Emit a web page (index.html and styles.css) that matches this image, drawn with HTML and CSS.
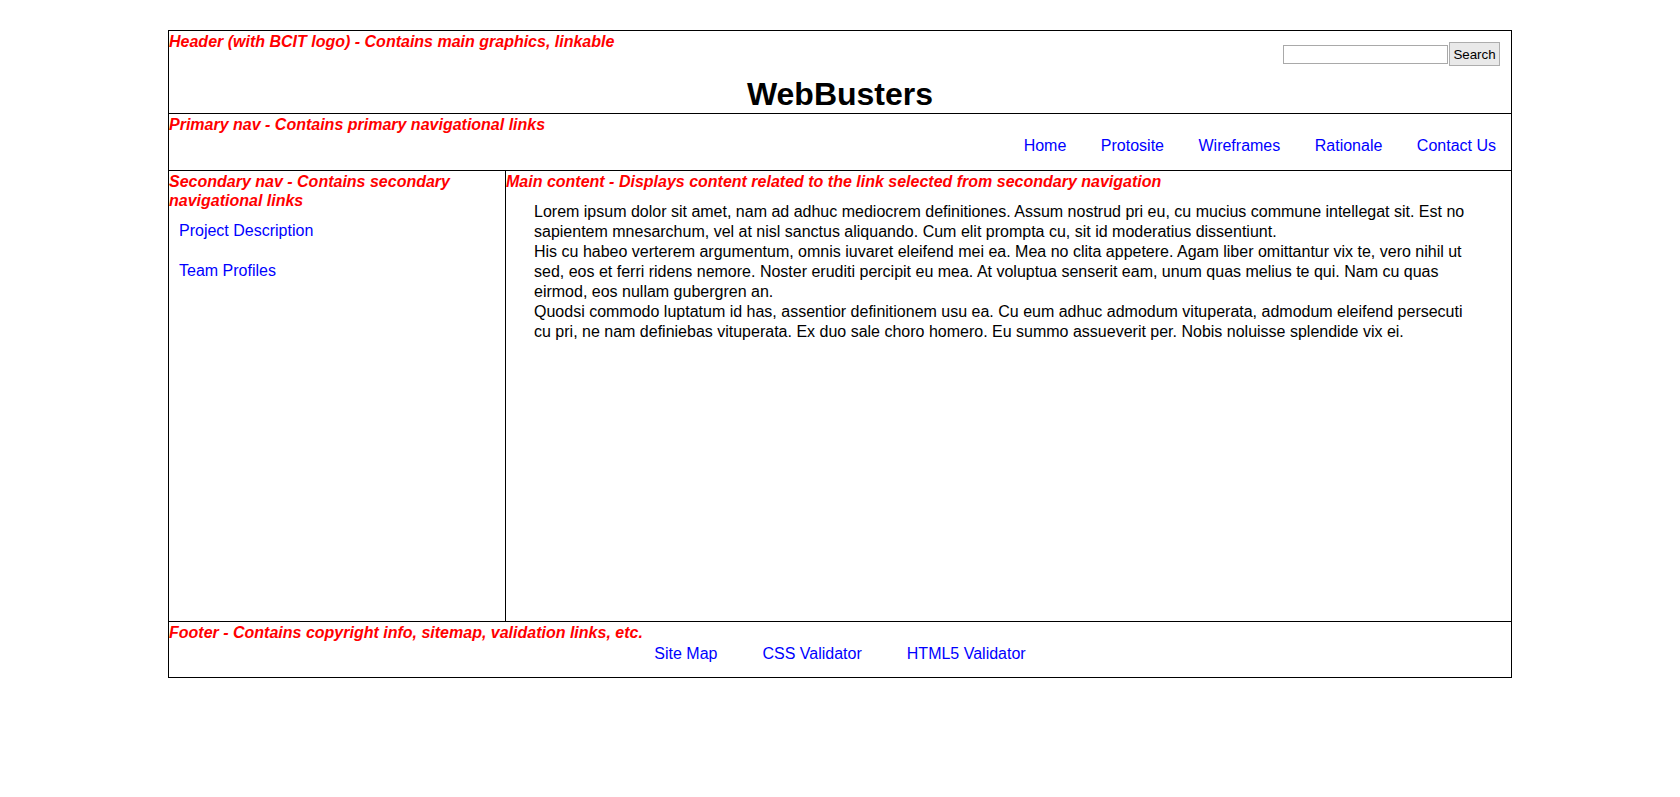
FILE: index.html
```html
<!DOCTYPE html>
<html lang="en">
<head>
<meta charset="utf-8">
<title>WebBusters</title>
<link rel="stylesheet" href="styles.css">
</head>
<body>
<div class="page">
  <header class="site-header">
    <div class="header-row">
      <p class="label">Header (with BCIT logo) - Contains main graphics, linkable</p>
      <form class="search" action="#">
        <input class="search-input" type="text" aria-label="Search">
        <button class="search-btn" type="button">Search</button>
      </form>
    </div>
    <h1 class="site-title">WebBusters</h1>
  </header>
  <nav class="primary-nav">
    <p class="label">Primary nav - Contains primary navigational links</p>
    <ul class="primary-links">
      <li><a href="#">Home</a></li>
      <li><a href="#">Protosite</a></li>
      <li><a href="#">Wireframes</a></li>
      <li><a href="#">Rationale</a></li>
      <li><a href="#">Contact Us</a></li>
    </ul>
  </nav>
  <div class="middle">
    <aside class="secondary-nav">
      <p class="label">Secondary nav - Contains secondary navigational links</p>
      <ul class="secondary-links">
        <li><a href="#">Project Description</a></li>
        <li><a href="#">Team Profiles</a></li>
      </ul>
    </aside>
    <main class="main-content">
      <p class="label">Main content - Displays content related to the link selected from secondary navigation</p>
      <p class="body-text">Lorem ipsum dolor sit amet, nam ad adhuc mediocrem definitiones. Assum nostrud pri eu, cu mucius commune intellegat sit. Est no sapientem mnesarchum, vel at nisl sanctus aliquando. Cum elit prompta cu, sit id moderatius dissentiunt.<br>His cu habeo verterem argumentum, omnis iuvaret eleifend mei ea. Mea no clita appetere. Agam liber omittantur vix te, vero nihil ut sed, eos et ferri ridens nemore. Noster eruditi percipit eu mea. At voluptua senserit eam, unum quas melius te qui. Nam cu quas eirmod, eos nullam gubergren an.<br>Quodsi commodo luptatum id has, assentior definitionem usu ea. Cu eum adhuc admodum vituperata, admodum eleifend persecuti cu pri, ne nam definiebas vituperata. Ex duo sale choro homero. Eu summo assueverit per. Nobis noluisse splendide vix ei.</p>
    </main>
  </div>
  <footer class="site-footer">
    <p class="label">Footer - Contains copyright info, sitemap, validation links, etc.</p>
    <ul class="footer-links">
      <li><a href="#">Site Map</a></li>
      <li><a href="#">CSS Validator</a></li>
      <li><a href="#">HTML5 Validator</a></li>
    </ul>
  </footer>
</div>
</body>
</html>
```

FILE: styles.css
```css
html, body {
  margin: 0;
  padding: 0;
  background: #fff;
}

body {
  font-family: "Liberation Sans", Arial, sans-serif;
  font-size: 16px;
  color: #000;
}

a {
  color: #0000ff;
  text-decoration: none;
}

ul {
  list-style: none;
  margin: 0;
  padding: 0;
}

.page {
  box-sizing: border-box;
  width: 1344px;
  margin: 30px auto 0;
  border: 1px solid #000;
}

.label {
  margin: 0;
  padding-top: 2px;
  color: #ff0000;
  font-weight: bold;
  font-style: italic;
  line-height: 18.5px;
}

/* Header */
.site-header {
  border-bottom: 1px solid #000;
}

.header-row {
  display: flex;
  justify-content: space-between;
  align-items: flex-start;
}

.search {
  display: flex;
  align-items: center;
  gap: 1px;
  margin: 11px 11px 0 0;
}

.search-input {
  box-sizing: border-box;
  width: 165px;
  height: 19px;
  margin: 0;
  padding: 1px 2px;
  border: 1px solid #a9a9a9;
  border-radius: 0;
  background: #fff;
  font-family: "Liberation Sans", Arial, sans-serif;
  font-size: 13px;
}

.search-btn {
  box-sizing: border-box;
  width: 51px;
  height: 24px;
  margin: 0;
  padding: 0;
  border: 1px solid #adadad;
  border-radius: 0;
  background: #e9e9e9;
  color: #000;
  font-family: "Liberation Sans", Arial, sans-serif;
  font-size: 13.33px;
}

.site-title {
  margin: 10px 0 0;
  text-align: center;
  font-size: 32px;
  font-weight: bold;
  line-height: 37px;
}

/* Primary nav */
.primary-nav {
  border-bottom: 1px solid #000;
  padding-bottom: 15px;
}

.primary-links {
  display: flex;
  justify-content: flex-end;
  gap: 34.5px;
  margin: 1.5px 15px 0 0;
  line-height: 19px;
}

/* Middle */
.middle {
  display: grid;
  grid-template-columns: 337px 1fr;
  height: 450px;
  border-bottom: 1px solid #000;
}

.secondary-nav {
  box-sizing: border-box;
  border-right: 1px solid #000;
}

.secondary-links {
  margin-top: 11px;
  padding-left: 10px;
}

.secondary-links li {
  line-height: 20px;
  margin-bottom: 20px;
}

.main-content {
  min-width: 0;
}

.body-text {
  margin: 10px 0 0;
  padding: 0 28px;
  line-height: 20px;
}

/* Footer */
.site-footer {
  padding-bottom: 14.5px;
}

.footer-links {
  display: flex;
  justify-content: center;
  gap: 45px;
  margin-top: 1px;
  line-height: 19px;
}
```
